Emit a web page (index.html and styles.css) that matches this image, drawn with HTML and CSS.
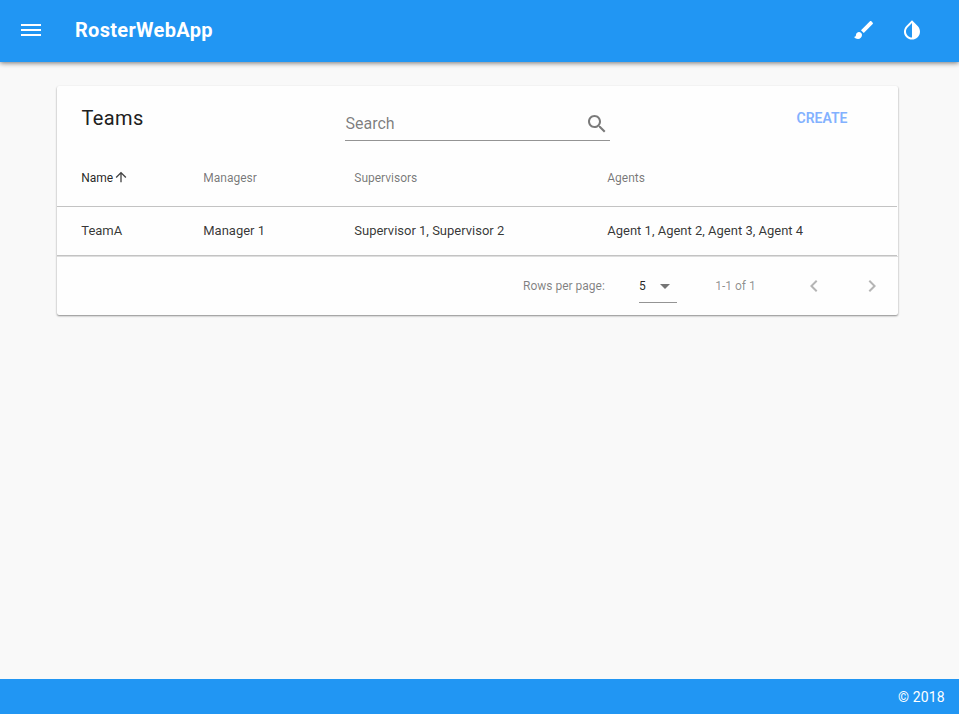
FILE: index.html
```html
<!DOCTYPE html>
<html lang="en">
<head>
<meta charset="utf-8">
<title>RosterWebApp</title>
<link rel="stylesheet" href="styles.css">
</head>
<body>
<header class="toolbar">
  <svg class="menu-icon" width="20" height="12" viewBox="0 0 20 12"><path d="M0 0h20v2H0zM0 5h20v2H0zM0 10h20v2H0z"/></svg>
  <h1 class="brand">RosterWebApp</h1>
  <svg class="icon" viewBox="0 0 24 24"><path d="M7 14c-1.66 0-3 1.34-3 3 0 1.31-1.16 2-2 2 .92 1.22 2.49 2 4 2 2.21 0 4-1.79 4-4 0-1.66-1.34-3-3-3zm13.71-9.37l-1.34-1.34c-.39-.39-1.02-.39-1.41 0L9 12.25 11.75 15l8.96-8.96c.39-.39.39-1.02 0-1.41z"/></svg>
  <svg class="icon" viewBox="0 0 24 24"><path d="M17.66 7.93L12 2.27 6.34 7.93c-3.12 3.12-3.12 8.19 0 11.31C7.9 20.8 9.95 21.58 12 21.58s4.1-.78 5.66-2.34c3.12-3.12 3.12-8.19 0-11.31zM12 19.59c-1.6 0-3.11-.62-4.24-1.76C6.62 16.69 6 15.19 6 13.59s.62-3.11 1.76-4.24L12 5.1v14.49z"/></svg>
</header>
<main class="content">
  <section class="card">
    <div class="card-head">
      <h2 class="title">Teams</h2>
      <div class="search">
        <span>Search</span>
        <svg class="search-icon" viewBox="0 0 24 24"><path d="M15.5 14h-.79l-.28-.27C15.41 12.59 16 11.11 16 9.5 16 5.91 13.09 3 9.5 3S3 5.91 3 9.5 5.91 16 9.5 16c1.61 0 3.09-.59 4.23-1.57l.27.28v.79l5 4.99L20.49 19l-4.99-5zm-6 0C7.01 14 5 11.99 5 9.5S7.01 5 9.5 5 14 7.01 14 9.5 11.99 14 9.5 14z"/></svg>
      </div>
      <button class="create">CREATE</button>
    </div>
    <div class="row labels">
      <span class="sorted">Name<svg class="arrow" viewBox="0 0 24 24"><path d="M4 12l1.41 1.41L11 7.83V20h2V7.83l5.58 5.59L20 12l-8-8-8 8z"/></svg></span>
      <span>Managesr</span><span>Supervisors</span><span>Agents</span>
    </div>
    <div class="row data">
      <span>TeamA</span><span>Manager 1</span><span>Supervisor 1, Supervisor 2</span><span>Agent 1, Agent 2, Agent 3, Agent 4</span>
    </div>
    <div class="pager">
      <span class="per-page">Rows per page:</span>
      <div class="select">5<svg class="caret" width="10" height="5" viewBox="0 0 10 5"><path d="M0 0l5 5 5-5z"/></svg></div>
      <span class="range">1-1 of 1</span>
      <svg class="chevron" viewBox="0 0 24 24"><path d="M15.41 7.41L14 6l-6 6 6 6 1.41-1.41L10.83 12z"/></svg>
      <svg class="chevron" viewBox="0 0 24 24"><path d="M10 6L8.59 7.41 13.17 12l-4.58 4.59L10 18l6-6z"/></svg>
    </div>
  </section>
</main>
<footer class="footer">© 2018</footer>
</body>
</html>
```
FILE: styles.css
```css
* { box-sizing: border-box; }
body {
  margin: 0;
  height: 100vh;
  display: flex;
  flex-direction: column;
  background: #f9f9f9;
  color: rgba(0, 0, 0, .87);
  font-family: Roboto, sans-serif;
}
svg { flex: none; fill: currentColor; }
h1, h2 { margin: 0; }
.toolbar {
  height: 62px;
  display: flex;
  align-items: center;
  padding: 0 35px 2px 21px;
  background: #2196f3;
  color: #fff;
  box-shadow: 0 1px 5px rgba(0, 0, 0, .55);
}
.brand {
  flex: 1;
  margin-left: 34px;
  font-size: 20px;
  line-height: 24px;
  font-weight: 700;
  letter-spacing: .3px;
}
.icon { width: 24px; height: 24px; }
.icon + .icon { margin-left: 24px; }
.content { flex: 1; padding: 24px 61px 0 57px; }
.card {
  height: 229px;
  background: #fefefe;
  border-radius: 2px;
  box-shadow: 0 1px 2px rgba(0, 0, 0, .45);
}
.card-head { display: flex; height: 63px; }
.title {
  width: 288px;
  padding: 20px 0 0 24.4px;
  font-size: 20px;
  line-height: 25px;
  font-weight: 450;
  letter-spacing: .4px;
  color: #202020;
}
.search {
  width: 265px;
  height: 55px;
  padding: 20px 0 0 .5px;
  display: flex;
  justify-content: space-between;
  border-bottom: 1px solid #949494;
  color: rgba(0, 0, 0, .52);
  font-size: 16px;
  line-height: 35px;
}
.search-icon { width: 24px; height: 24px; margin: 6px 1px 0 0; }
.create {
  margin: 14px 0 0 178px;
  width: 68px;
  height: 36px;
  padding: 0;
  border: 0;
  background: none;
  color: #82b1ff;
  font: 600 14px/37px Roboto, sans-serif;
}
.row {
  display: grid;
  grid-template-columns: 122px 151px 253px 1fr;
  padding-left: 24.25px;
  margin-right: 1px;
  border-bottom: 1px solid #c3c3c3;
  white-space: nowrap;
}
.labels {
  height: 58px;
  font-size: 12px;
  line-height: 59px;
  color: rgba(0, 0, 0, .54);
}
.sorted { display: flex; height: 57px; color: rgba(0, 0, 0, .87); }
.arrow { width: 16px; height: 16px; margin-top: 20px; fill: #444; }
.data { height: 49px; font-size: 13px; line-height: 48px; color: rgba(0, 0, 0, .8); }
.pager {
  height: 59px;
  display: flex;
  align-items: center;
  padding-right: 14px;
  border-top: 1px solid #dedede;
  font-size: 12px;
  color: rgba(0, 0, 0, .5);
}
.per-page { width: 116px; margin-left: 466px; }
.select {
  width: 38px;
  height: 33px;
  margin-top: 13px;
  padding-right: 7px;
  align-self: flex-start;
  display: flex;
  align-items: center;
  justify-content: space-between;
  border-bottom: 1px solid #949494;
  color: rgba(0, 0, 0, .87);
}
.caret { fill: #757575; }
.range { flex: 1; margin-left: 38.2px; color: rgba(0, 0, 0, .45); }
.chevron { width: 24px; height: 24px; fill: #b5b5b5; }
.chevron + .chevron { margin-left: 34px; }
.footer {
  height: 35px;
  padding: 0 14.4px 0 0;
  background: #2196f3;
  color: #fff;
  font-size: 14px;
  line-height: 37px;
  letter-spacing: .1px;
  text-align: right;
}
```
